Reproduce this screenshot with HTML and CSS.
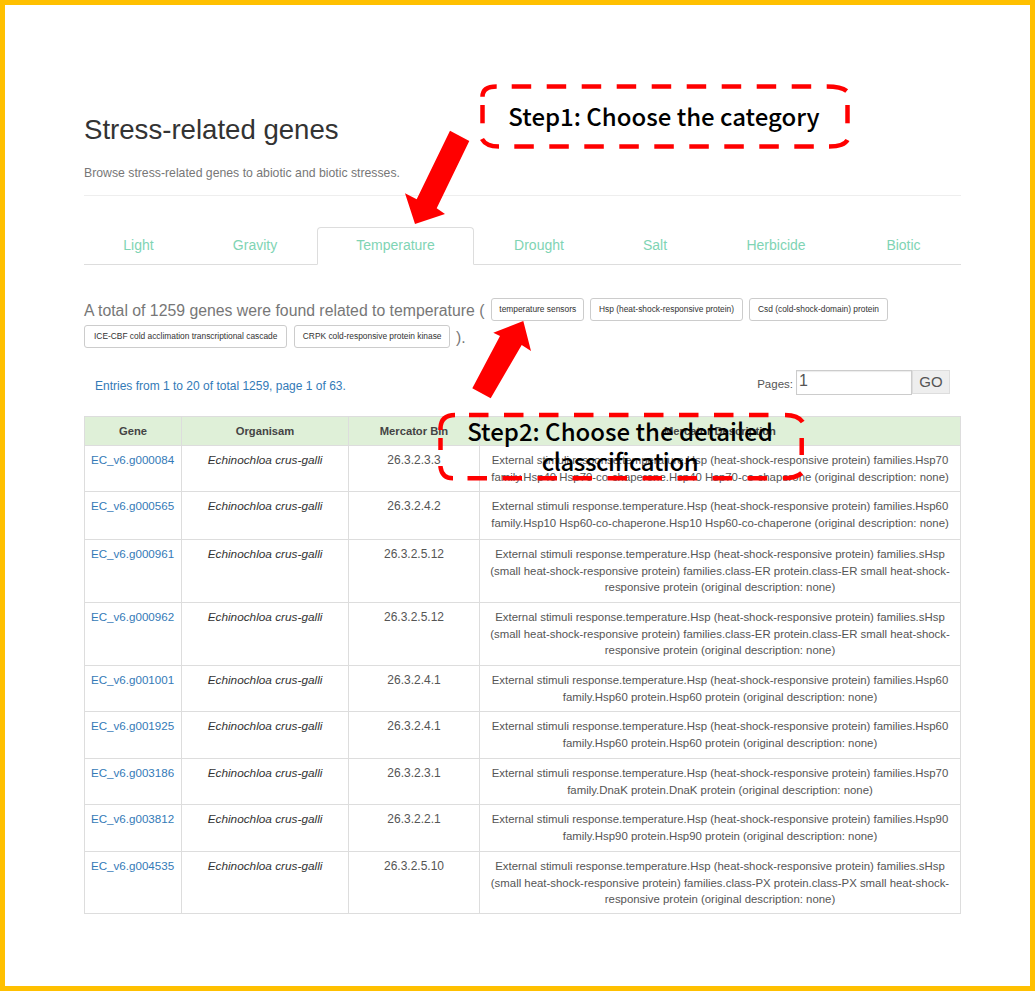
FILE: index.html
```html
<!DOCTYPE html>
<html lang="en">
<head>
<meta charset="utf-8">
<title>Stress-related genes</title>
<link rel="stylesheet" href="styles.css">
</head>
<body>
<div class="frame">
  <main class="content">
    <header class="page-header">
      <h1>Stress-related genes</h1>
      <p class="lead">Browse stress-related genes to abiotic and biotic stresses.</p>
    </header>
    <nav class="tabs">
      <a class="tab">Light</a>
      <a class="tab">Gravity</a>
      <a class="tab active">Temperature</a>
      <a class="tab">Drought</a>
      <a class="tab">Salt</a>
      <a class="tab">Herbicide</a>
      <a class="tab">Biotic</a>
    </nav>
    <div class="summary">A total of 1259 genes were found related to temperature ( <button class="chip chip-first">temperature sensors</button> <button class="chip">Hsp (heat-shock-responsive protein)</button> <button class="chip">Csd (cold-shock-domain) protein</button> <button class="chip chip-wide">ICE-CBF cold acclimation transcriptional cascade</button> <button class="chip chip-tight">CRPK cold-responsive protein kinase</button> ).</div>
    <div class="pager">
      <span class="entries">Entries from 1 to 20 of total 1259, page 1 of 63.</span>
      <div class="pages">
        <span class="pages-label">Pages:</span>
        <input class="page-input" value="1">
        <button class="go">GO</button>
      </div>
    </div>
    <table class="genes">
      <colgroup><col class="c1"><col class="c2"><col class="c3"><col class="c4"></colgroup>
      <thead><tr><th>Gene</th><th>Organisam</th><th>Mercator Bin</th><th>Mercator Description</th></tr></thead>
      <tbody>
        <tr class="h46"><td><a>EC_v6.g000084</a></td><td><em>Echinochloa crus-galli</em></td><td class="bin">26.3.2.3.3</td><td>External stimuli response.temperature.Hsp (heat-shock-responsive protein) families.Hsp70 family.Hsp40 Hsp70-co-chaperone.Hsp40 Hsp70-co-chaperone (original description: none)</td></tr>
        <tr class="h48"><td><a>EC_v6.g000565</a></td><td><em>Echinochloa crus-galli</em></td><td class="bin">26.3.2.4.2</td><td>External stimuli response.temperature.Hsp (heat-shock-responsive protein) families.Hsp60 family.Hsp10 Hsp60-co-chaperone.Hsp10 Hsp60-co-chaperone (original description: none)</td></tr>
        <tr class="h63"><td><a>EC_v6.g000961</a></td><td><em>Echinochloa crus-galli</em></td><td class="bin">26.3.2.5.12</td><td>External stimuli response.temperature.Hsp (heat-shock-responsive protein) families.sHsp (small heat-shock-responsive protein) families.class-ER protein.class-ER small heat-shock-responsive protein (original description: none)</td></tr>
        <tr class="h63"><td><a>EC_v6.g000962</a></td><td><em>Echinochloa crus-galli</em></td><td class="bin">26.3.2.5.12</td><td>External stimuli response.temperature.Hsp (heat-shock-responsive protein) families.sHsp (small heat-shock-responsive protein) families.class-ER protein.class-ER small heat-shock-responsive protein (original description: none)</td></tr>
        <tr class="h46"><td><a>EC_v6.g001001</a></td><td><em>Echinochloa crus-galli</em></td><td class="bin">26.3.2.4.1</td><td>External stimuli response.temperature.Hsp (heat-shock-responsive protein) families.Hsp60 family.Hsp60 protein.Hsp60 protein (original description: none)</td></tr>
        <tr class="h47"><td><a>EC_v6.g001925</a></td><td><em>Echinochloa crus-galli</em></td><td class="bin">26.3.2.4.1</td><td>External stimuli response.temperature.Hsp (heat-shock-responsive protein) families.Hsp60 family.Hsp60 protein.Hsp60 protein (original description: none)</td></tr>
        <tr class="h46"><td><a>EC_v6.g003186</a></td><td><em>Echinochloa crus-galli</em></td><td class="bin">26.3.2.3.1</td><td>External stimuli response.temperature.Hsp (heat-shock-responsive protein) families.Hsp70 family.DnaK protein.DnaK protein (original description: none)</td></tr>
        <tr class="h47"><td><a>EC_v6.g003812</a></td><td><em>Echinochloa crus-galli</em></td><td class="bin">26.3.2.2.1</td><td>External stimuli response.temperature.Hsp (heat-shock-responsive protein) families.Hsp90 family.Hsp90 protein.Hsp90 protein (original description: none)</td></tr>
        <tr class="h61"><td><a>EC_v6.g004535</a></td><td><em>Echinochloa crus-galli</em></td><td class="bin">26.3.2.5.10</td><td>External stimuli response.temperature.Hsp (heat-shock-responsive protein) families.sHsp (small heat-shock-responsive protein) families.class-PX protein.class-PX small heat-shock-responsive protein (original description: none)</td></tr>
      </tbody>
    </table>
  </main>
  <svg class="annotations" width="1035" height="991" viewBox="0 0 1035 991" aria-hidden="true">
    <g class="dash-solid">
      <path d="M482.5 96.7Q482.5 86.5 496.7 86.5"/>
      <path d="M826.7 86.5Q841 86.5 846.7 91"/>
      <path d="M847.5 140Q844 146.5 829 146.5"/>
      <path d="M482 139Q486 146.5 499 146.5"/>
      <path d="M482.5 105V123.3"/>
      <path d="M847.5 105V123.3"/>
      <path d="M440.5 430V428Q441 415 455 415"/>
      <path d="M785 415Q798 415 802.7 422"/>
      <path d="M801.7 473Q796 478.3 783 478.3"/>
      <path d="M440.5 466V467Q442 478.3 453 478.3"/>
      <path d="M440.5 438V450"/>
      <path d="M801.7 438V455"/>
    </g>
    <g class="dash-run">
      <path d="M511.7 86.5H826.7"/>
      <path d="M514.3 146.5H814.3"/>
      <path d="M469 415H769"/>
      <path d="M467.5 478.3H767"/>
    </g>
    <polygon class="arrow" points="450,130.7 469.3,141 436.7,208.3 445,214 415,224 405,193.3 416.7,199.3"/>
    <polygon class="arrow" points="523.3,321 531,351 521.7,345 490.7,398.3 472.3,388.3 500,336 493.3,332.7"/>
  </svg>
  <div class="callout callout-one">Step1: Choose the category</div>
  <div class="callout callout-two">Step2: Choose the detailed <span class="callout-tail">classcification</span></div>
</div>
</body>
</html>
```
FILE: styles.css
```css
* { box-sizing: border-box; }
html, body { margin: 0; padding: 0; }
body { background: #fff; font-family: "Liberation Sans", Arial, sans-serif; color: #333; }
.frame {
  position: relative;
  width: 1035px;
  height: 991px;
  border: 5px solid #ffc000;
  overflow: hidden;
}
.content { width: 877px; margin-left: 79px; padding-top: 109px; }
.page-header { border-bottom: 1px solid #eee; height: 82px; }
h1 { margin: 0; font-size: 27.6px; font-weight: 400; line-height: 32px; color: #333; }
.lead { margin: 19px 0 0; font-size: 12.25px; line-height: 16px; color: #777; }
.tabs {
  display: grid;
  grid-template-columns: 109px 124px 157px 130px 102px 140px 115px;
  margin-top: 31px;
  height: 38px;
  border-bottom: 1px solid #ddd;
}
.tab {
  height: 38px;
  line-height: 34px;
  font-size: 14px;
  text-align: center;
  color: #7fd4b4;
  border: 1px solid transparent;
}
.tab.active {
  border-color: #ddd;
  border-bottom-color: #fff;
  border-radius: 4px 4px 0 0;
  background: #fff;
}
.summary { margin-top: 32px; font-size: 15.8px; line-height: 27px; color: #777; }
.chip {
  height: 23px;
  padding: 0 8px;
  font: 8.4px/21px "Liberation Sans", Arial, sans-serif;
  color: #333;
  background: #fff;
  border: 1px solid #ccc;
  border-radius: 3px;
  margin-right: 1.5px;
  vertical-align: 4px;
}
.chip-first { margin-left: 2.5px; padding: 0 7px; }
.chip-wide { padding: 0 9px; margin-right: 2.5px; }
.chip-tight { padding: 0 7.5px; }
.pager {
  display: flex;
  justify-content: space-between;
  align-items: center;
  margin-top: 22px;
  padding: 0 11px;
  height: 26px;
}
.entries { font-size: 12px; color: #337ab7; }
.pages { display: flex; align-items: flex-start; margin-bottom: 4px; }
.pages-label { font-size: 11.5px; line-height: 29px; color: #555; margin-right: 3px; }
.page-input {
  width: 116px;
  height: 25px;
  padding: 0 2px 2px;
  font: 16px "Liberation Sans", Arial, sans-serif;
  color: #555;
  border: 1px solid #ccc;
  box-shadow: inset 0 1px 1px rgba(0, 0, 0, .08);
  outline: none;
}
.go {
  width: 38px;
  height: 24px;
  padding: 0;
  font: 15px "Liberation Sans", Arial, sans-serif;
  color: #555;
  background: #eee;
  border: 1px solid #ddd;
}
.genes {
  width: 876px;
  margin-top: 17px;
  border-collapse: collapse;
  table-layout: fixed;
  font-size: 11.4px;
  line-height: 16.5px;
  color: #555;
}
.c1 { width: 97px; }
.c2 { width: 167px; }
.c3 { width: 131px; }
.c4 { width: 481px; }
.genes th, .genes td { border: 1px solid #ddd; text-align: center; vertical-align: top; }
.genes th { height: 29px; padding: 5px 6px; font-size: 11.2px; background: #dff0d8; font-weight: 700; color: #444; vertical-align: middle; }
.genes td { padding: 6px 10px 5px; }
.genes td:first-child { text-align: left; padding-left: 6px; padding-right: 0; }
.genes a { color: #337ab7; font-size: 11.6px; }
.genes em { color: #333; font-size: 11.8px; }
.genes .bin { font-size: 12px; }
.h46 { height: 46px; }
.h47 { height: 47px; }
.h48 { height: 48px; }
.h61 { height: 61px; }
.h63 { height: 63px; }
.annotations { position: absolute; left: -5px; top: -5px; }
.dash-solid path, .dash-run path { fill: none; stroke: #f00; stroke-width: 4.5; }
.dash-run path { stroke-dasharray: 19.5 15.5; }
.arrow { fill: #f00; }
.callout {
  position: absolute;
  font-family: "Noto Sans CJK SC", "Noto Sans", sans-serif;
  font-weight: 500;
  font-size: 24px;
  line-height: 30px;
  color: #000;
  text-align: center;
}
.callout-one { left: 475px; top: 96px; width: 368px; white-space: nowrap; }
.callout-two { left: 439px; top: 411px; width: 352px; }
.callout-tail { display: block; letter-spacing: -.4px; }
```
